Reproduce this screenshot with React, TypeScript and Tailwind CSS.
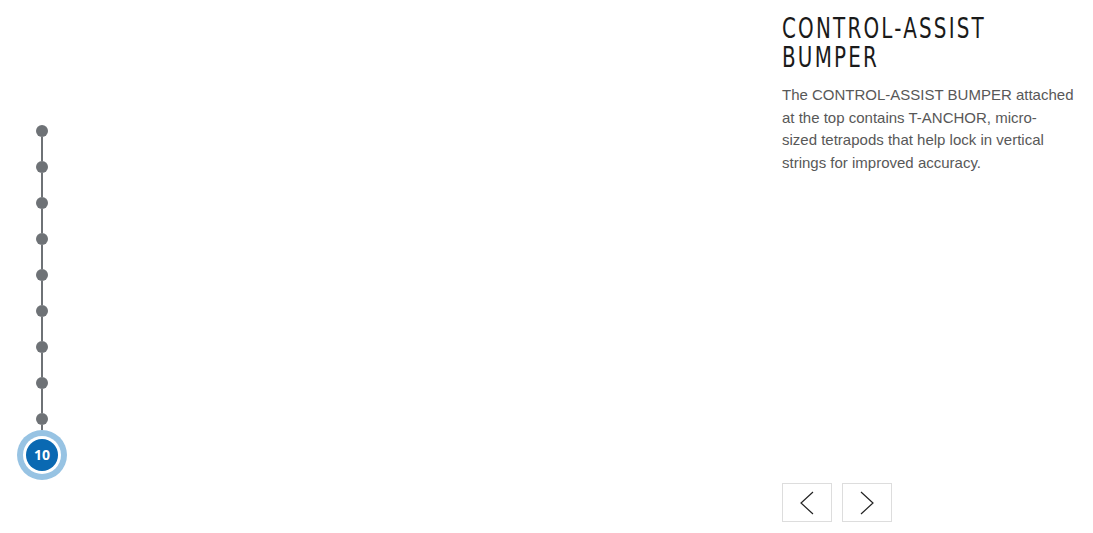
const steps = [1, 2, 3, 4, 5, 6, 7, 8, 9];

function Timeline() {
  return (
    <div className="flex w-[50px] flex-col items-center pt-[125px]">
      {steps.map((s) => (
        <div key={s} className="flex flex-col items-center">
          <div className="h-[12px] w-[12px] rounded-full bg-[#6e7276]" />
          <div className={`w-[2px] bg-[#6e7276] ${s === 9 ? 'h-[5px]' : 'h-[24px]'}`} />
        </div>
      ))}
      <div className="flex h-[50px] w-[50px] items-center justify-center rounded-full bg-[#97c3e3]">
        <div className="flex h-[38px] w-[38px] items-center justify-center rounded-full bg-white">
          <div className="flex h-[32px] w-[32px] items-center justify-center rounded-full bg-[#0a69b2] pb-[1px] text-[14px] font-bold text-white [font-family:'Open_Sans',sans-serif]">
            10
          </div>
        </div>
      </div>
    </div>
  );
}

function Chevron({ dir }: { dir: 'left' | 'right' }) {
  return (
    <svg width="14" height="24" viewBox="0 0 14 24" fill="none" stroke="#222" strokeWidth="1.2">
      {dir === 'left' ? <polyline points="13,1 1,12 13,23" /> : <polyline points="1,1 13,12 1,23" />}
    </svg>
  );
}

export default function App() {
  return (
    <div className="flex h-[533px] w-full bg-white">
      <div className="pl-[17px]">
        <Timeline />
      </div>
      <aside className="ml-auto mr-[11px] flex w-[300px] flex-col justify-between pt-[14px] pb-[11px]">
        <div>
          <h2 className="origin-left scale-x-[0.79] whitespace-nowrap text-[28px] tracking-[0.1em] text-[#1a1a1a] [font-family:'DejaVu_Sans_Condensed',sans-serif]">
            <div className="h-[29px] leading-[29px]">CONTROL-ASSIST</div>
            <div className="h-[29px] leading-[29px]">BUMPER</div>
          </h2>
          <p className="mt-[12px] text-[15px] leading-[22.5px] text-[#585858] [font-family:'Liberation_Sans',Arial,sans-serif]">
            The CONTROL-ASSIST BUMPER attached
            <br />
            at the top contains T-ANCHOR, micro-
            <br />
            sized tetrapods that help lock in vertical
            <br />
            strings for improved accuracy.
          </p>
        </div>
        <div className="flex gap-[10px]">
          <button className="flex h-[39px] w-[50px] items-center justify-center border border-[#ddd]">
            <Chevron dir="left" />
          </button>
          <button className="flex h-[39px] w-[50px] items-center justify-center border border-[#ddd]">
            <Chevron dir="right" />
          </button>
        </div>
      </aside>
    </div>
  );
}
